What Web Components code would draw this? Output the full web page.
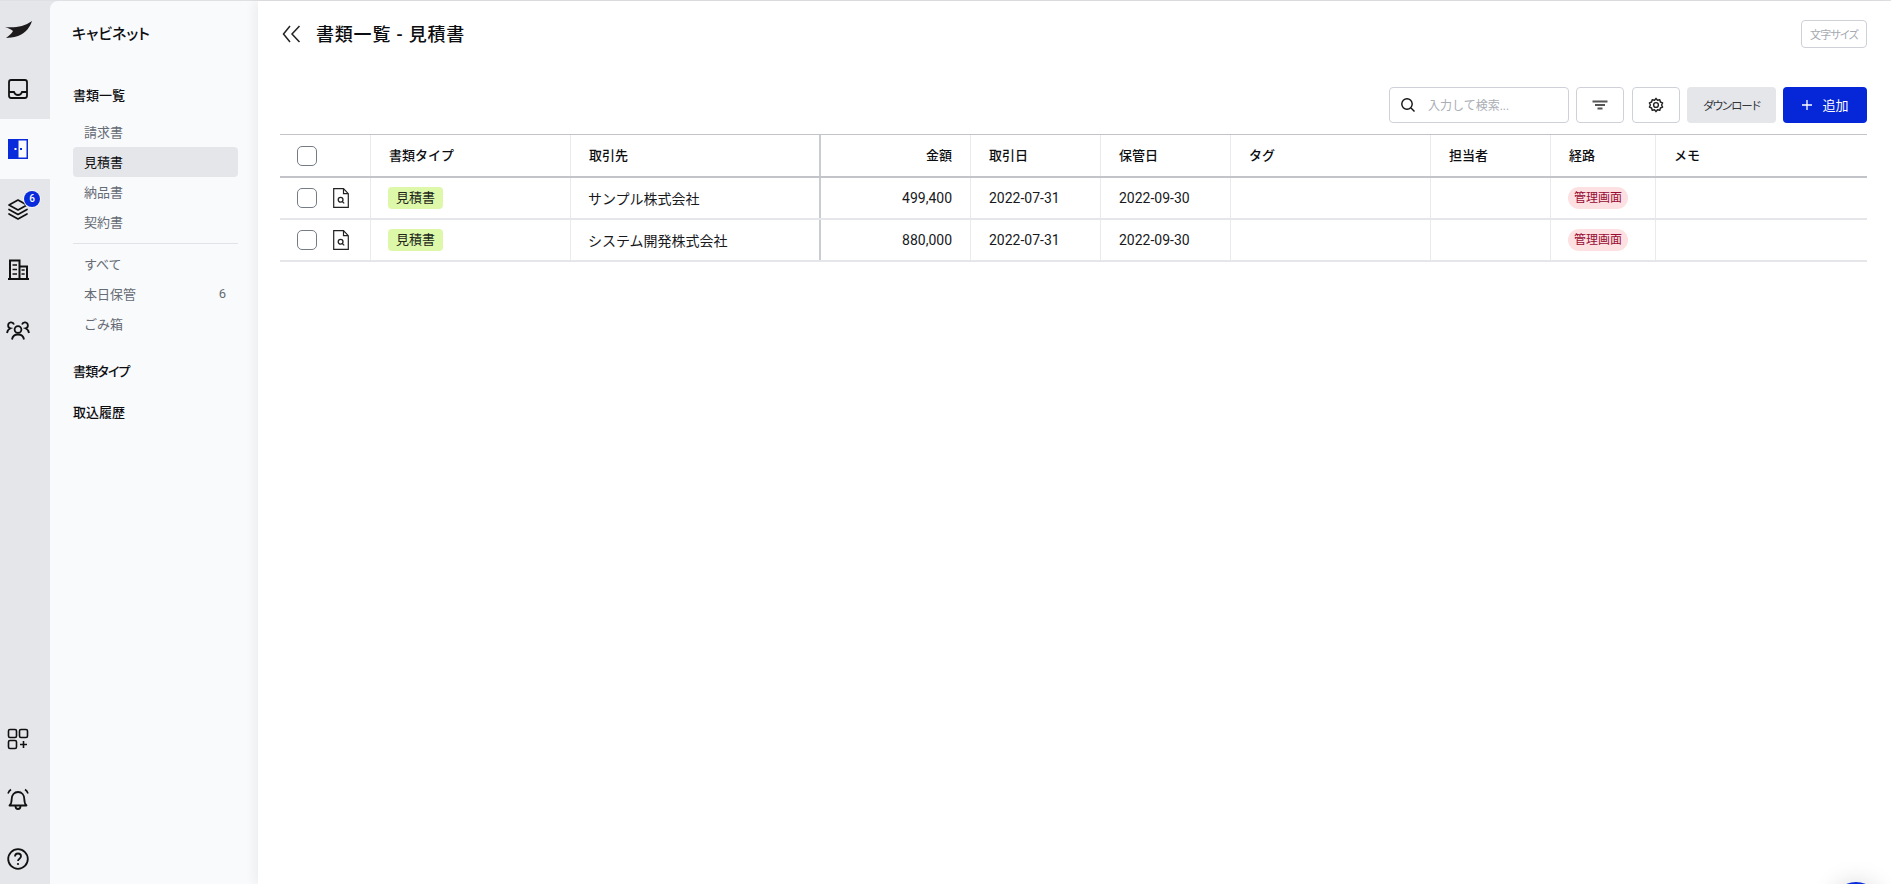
<!DOCTYPE html>
<html lang="ja">
<head>
<meta charset="utf-8">
<title>書類一覧 - 見積書</title>
<style>
  html, body { margin: 0; height: 100%; overflow: hidden; }
  body { font-family: Roboto, "Noto Sans CJK JP", sans-serif; color: #0c0d10; background: #e5e6ea; }
</style>
</head>
<body>
<cabinet-app></cabinet-app>
<script>
/**
 * Data Source
 */
const ICONS = {
  inbox: '<rect x="3" y="3" width="18" height="18" rx="2.2" fill="none" stroke="#111" stroke-width="1.8"/><path d="M3 15h5c.6 2 2 3 4 3s3.400-1 4-3h5" fill="none" stroke="#111" stroke-width="1.8"/>',
  door: '<rect x="2" y="2" width="20" height="20" fill="#0a2bdc"/><rect x="12.500" y="3.500" width="8" height="17" fill="#f9fafc"/><rect x="8.500" y="11" width="2" height="2" fill="#f9fafc"/><rect x="14" y="11" width="2" height="2" fill="#0a2bdc"/>',
  stack: '<path d="M12 3l9 5-9 5-9-5z M3 12.500l9 5 9-5 M3 17l9 5 9-5" fill="none" stroke="#111" stroke-width="1.700" stroke-linejoin="round" stroke-linecap="round"/>',
  building: '<path d="M2 22h21 M4 22V3.500h9.500V22 M13.500 9.500H21V22" fill="none" stroke="#111" stroke-width="2"/><path d="M6.500 8h4.500 M6.500 12.500h4.500 M6.500 17h4.500 M15.500 13h3.200 M15.500 17h3.200" fill="none" stroke="#111" stroke-width="1.700"/>',
  users: '<circle cx="12" cy="12.500" r="3.400" fill="none" stroke="#111" stroke-width="1.800"/><path d="M6 22.500c.5-3.500 3-5 6-5s5.500 1.500 6 5" fill="none" stroke="#111" stroke-width="1.800"/><path d="M8 7.500a3 3 0 1 0-3.500 3.800C3 12 1.500 13.500 1 16 M16 7.500a3 3 0 1 1 3.500 3.800c1.500.7 3 2.200 3.500 4.700" fill="none" stroke="#111" stroke-width="1.800"/>',
  apps: '<rect x="2.500" y="2.500" width="8" height="8" rx="1.500" fill="none" stroke="#111" stroke-width="1.600"/><rect x="13.500" y="2.500" width="8" height="8" rx="1.500" fill="none" stroke="#111" stroke-width="1.600"/><rect x="2.500" y="13.500" width="8" height="8" rx="1.500" fill="none" stroke="#111" stroke-width="1.600"/><path d="M17.500 14v7 M14 17.500h7" stroke="#111" stroke-width="1.600"/>',
  bell: '<path d="M3.500 18.500c1.700-1.500 2.200-3 2.200-6.500 0-4 2.500-7 6.300-7s6.300 3 6.300 7c0 3.500.5 5 2.200 6.500z" fill="none" stroke="#111" stroke-width="1.800" stroke-linejoin="round"/><path d="M9.500 19c0 2 1 3 2.500 3s2.500-1 2.500-3" fill="none" stroke="#111" stroke-width="1.800"/><path d="M2 6.500c.6-1.700 1.500-3 3-4 M22 6.500c-.6-1.700-1.500-3-3-4" fill="none" stroke="#111" stroke-width="1.600"/>',
  help: '<circle cx="12" cy="12" r="9.800" fill="none" stroke="#111" stroke-width="1.800"/><path d="M9 9.500c0-1.800 1.300-3 3-3s3 1.200 3 2.800c0 2.400-3 2.400-3 4.700" fill="none" stroke="#111" stroke-width="1.800"/><circle cx="12" cy="17" r="1.100" fill="#111"/>'
};

const ROWS = [
  { type: '見積書', partner: 'サンプル株式会社', amount: '499,400', dealt: '2022-07-31', stored: '2022-09-30', route: '管理画面' },
  { type: '見積書', partner: 'システム開発株式会社', amount: '880,000', dealt: '2022-07-31', stored: '2022-09-30', route: '管理画面' }
];

const COLUMNS = '91px 200px 250px 150px 130px 130px 200px 120px 105px 1fr';

/**
 * Web Component: <rail-item>
 */
class RailItem extends HTMLElement {
  connectedCallback() {
    const icon = ICONS[this.getAttribute('icon')];
    const badge = this.getAttribute('badge');
    this.attachShadow({ mode: 'open' }).innerHTML = `
      <style>
        :host { display: flex; align-items: center; justify-content: center; height: 60px; position: relative; padding-right: 14px; }
        :host([active]) { background: #f9fafc; }
        :host([small]) { height: 50px; }
        svg { width: 24px; height: 24px; display: block; }
        .badge {
          position: absolute; left: 24px; top: 12px; width: 16px; height: 16px; border-radius: 50%;
          background: #0a2bdc; color: #fff; font-size: 10px; line-height: 16px; text-align: center; font-weight: 500;
          box-shadow: 0 0 0 1px #f4f5f8;
        }
      </style>
      <svg viewBox="0 0 24 24">${icon}</svg>
      ${badge ? `<span class="badge">${badge}</span>` : ''}
    `;
  }
}
customElements.define('rail-item', RailItem);

/**
 * Web Component: <app-rail>
 */
class AppRail extends HTMLElement {
  constructor() {
    super();
    this.attachShadow({ mode: 'open' }).innerHTML = `
      <style>
        :host { display: flex; flex-direction: column; width: 50px; flex: none; background: #e5e6ea; }
        .logo { height: 58px; display: flex; align-items: flex-start; }
        .logo svg { width: 36px; height: 36px; margin: 12px 0 0 2px; }
        .bottom { margin-top: auto; display: flex; flex-direction: column; gap: 10px; }
      </style>
      <div class="logo"><svg viewBox="0 0 36 36"><path d="M3 14C12 15 22 14 30 8C28 14 24 20 16 23C11 24.500 7 24.500 4 25C7 23 10 20 11 18C9 16 6 15 3 14z" fill="#1d1a1c"/></svg></div>
      <rail-item icon="inbox"></rail-item>
      <rail-item icon="door" active></rail-item>
      <rail-item icon="stack" badge="6"></rail-item>
      <rail-item icon="building"></rail-item>
      <rail-item icon="users"></rail-item>
      <div class="bottom">
        <rail-item icon="apps" small></rail-item>
        <rail-item icon="bell" small></rail-item>
        <rail-item icon="help" small></rail-item>
      </div>
    `;
  }
}
customElements.define('app-rail', AppRail);

/**
 * Web Component: <nav-link>
 */
class NavLink extends HTMLElement {
  constructor() {
    super();
    this.attachShadow({ mode: 'open' }).innerHTML = `
      <style>
        :host {
          display: flex; justify-content: space-between; align-items: center; height: 30px; box-sizing: border-box;
          padding: 0 12px 2px 11px; border-radius: 4px; font-size: 13px; color: #666c75;
        }
        :host([active]) { background: #e5e6ea; color: #0c0d10; }
      </style>
      <span><slot></slot></span>
      <span><slot name="count"></slot></span>
    `;
  }
}
customElements.define('nav-link', NavLink);

/**
 * Web Component: <side-nav>
 */
class SideNav extends HTMLElement {
  constructor() {
    super();
    this.attachShadow({ mode: 'open' }).innerHTML = `
      <style>
        :host {
          display: block; width: 208px; flex: none; box-sizing: border-box; padding: 1px 20px 0 23px;
          background: #f9fafc; border-radius: 8px 0 0 0;
        }
        h1 { margin: 0 0 0 -1px; font-size: 15px; font-weight: 500; line-height: 22px; padding-top: 21px; font-feature-settings: "palt"; }
        h2 { margin: 0; font-size: 13px; font-weight: 500; line-height: 20px; }
        .first { margin-top: 41px; margin-bottom: 11px; }
        hr { border: 0; border-top: 1px solid #e1e3e8; margin: 6px 0 5px; }
        .after { margin-top: 23px; font-feature-settings: "palt"; letter-spacing: -.8px; }
        .last { margin-top: 21px; }
      </style>
      <h1>キャビネット</h1>
      <h2 class="first">書類一覧</h2>
      <nav-link>請求書</nav-link>
      <nav-link active>見積書</nav-link>
      <nav-link>納品書</nav-link>
      <nav-link>契約書</nav-link>
      <hr>
      <nav-link>すべて</nav-link>
      <nav-link>本日保管<span slot="count">6</span></nav-link>
      <nav-link>ごみ箱</nav-link>
      <h2 class="after">書類タイプ</h2>
      <h2 class="last">取込履歴</h2>
    `;
  }
}
customElements.define('side-nav', SideNav);

/**
 * Web Component: <page-toolbar>
 */
class PageToolbar extends HTMLElement {
  constructor() {
    super();
    this.attachShadow({ mode: 'open' }).innerHTML = `
      <style>
        :host { display: flex; justify-content: flex-end; gap: 7px; height: 36px; }
        .btn {
          box-sizing: border-box; height: 36px; border: 1px solid #cfd1d8; border-radius: 4px; background: #fff;
          display: flex; align-items: center; justify-content: center; font-size: 12px;
        }
        .icon { width: 48px; }
        .filter { margin-right: 1px; }
        .search { width: 180px; justify-content: flex-start; padding: 0 0 2px 10px; gap: 12px; color: #a9adb5; }
        .search svg { margin-top: 2px; }
        .download { width: 89px; border: 0; background: #e5e6ea; color: #33363c; font-size: 11.5px; letter-spacing: -1px; font-feature-settings: "palt"; }
        .add { width: 84px; border: 0; background: #0527d8; color: #fff; gap: 9px; font-size: 13px; padding-bottom: 2px; }
        .add svg { margin-top: 2px; }
      </style>
      <div class="btn search">
        <svg width="16" height="16" viewBox="0 0 16 16"><circle cx="7" cy="7" r="5.200" fill="none" stroke="#111" stroke-width="1.400"/><path d="M11 11l3.500 3.500" stroke="#111" stroke-width="1.400"/></svg>
        <span>入力して検索...</span>
      </div>
      <div class="btn icon filter">
        <svg width="16" height="12" viewBox="0 0 16 12"><path d="M.500 2.500h15 M3 6h10 M5.500 9.500h5" stroke="#555" stroke-width="1.800"/></svg>
      </div>
      <div class="btn icon">
        <svg width="16" height="16" viewBox="0 0 24 24"><circle cx="12" cy="12" r="3.600" fill="none" stroke="#222" stroke-width="2.100"/><path d="M12 2l2.200 2.800 3.500-.7.900 3.400 3.300 1.400-1.500 3.100 1.500 3.100-3.300 1.400-.9 3.400-3.500-.7L12 22l-2.200-2.800-3.500.7-.9-3.400-3.300-1.400L3.600 12 2.100 8.900l3.300-1.400.9-3.400 3.500.7z" fill="none" stroke="#222" stroke-width="2.100" stroke-linejoin="round"/></svg>
      </div>
      <div class="btn download">ダウンロード</div>
      <div class="btn add">
        <svg width="12" height="12" viewBox="0 0 12 12"><path d="M6 1v10 M1 6h10" stroke="#fff" stroke-width="1.300"/></svg>
        <span>追加</span>
      </div>
    `;
  }
}
customElements.define('page-toolbar', PageToolbar);

/**
 * Web Component: <doc-table>
 */
class DocTable extends HTMLElement {
  constructor() {
    super();
    const box = '<span class="check"></span>';
    const docIcon = `<svg width="16" height="20" viewBox="0 0 16 20"><path d="M.700.700h9.800l4.800 5v13.600H.700z M10.500.700v5h4.800" fill="none" stroke="#222" stroke-width="1.200"/><circle cx="7.600" cy="11.800" r="2.400" fill="none" stroke="#222" stroke-width="1.300"/><path d="M9.400 13.600l1.800 1.800" stroke="#222" stroke-width="1.300"/></svg>`;
    const heads = ['書類タイプ', '取引先', '金額', '取引日', '保管日', 'タグ', '担当者', '経路', 'メモ'];
    const cell = (text, cls = '') => `<div class="cell ${cls}">${text}</div>`;
    const rows = ROWS.map(r => `
      <div class="row body">
        <div class="cell tick">${box}${docIcon}</div>
        ${cell(`<span class="type">${r.type}</span>`, 'chip')}
        ${cell(r.partner, 'pin')}
        ${cell(r.amount, 'num')}
        ${cell(r.dealt)}
        ${cell(r.stored)}
        ${cell('')}
        ${cell('')}
        ${cell(`<span class="route">${r.route}</span>`, 'chip')}
        ${cell('')}
      </div>`).join('');
    this.attachShadow({ mode: 'open' }).innerHTML = `
      <style>
        :host { display: block; border-top: 1px solid #c2c4c9; font-size: 13px; }
        .row { display: grid; grid-template-columns: ${COLUMNS}; box-sizing: border-box; }
        .head { height: 43px; border-bottom: 2px solid #c2c4c9; font-weight: 500; }
        .head .cell { padding-bottom: 2px; }
        .head .tick { padding-bottom: 0; }
        .body { height: 42px; border-bottom: 2px solid #e4e6ea; }
        .cell {
          display: flex; align-items: center; padding: 0 18px; min-width: 0;
          border-right: 1px solid #e8eaed; white-space: nowrap;
        }
        .cell:last-child { border-right: 0; }
        .body .cell { font-size: 14px; color: #17191d; }
        .body .chip, .body .pin { padding-left: 17px; }
        .pin { border-right: 2px solid #c9ccd0 !important; }
        .num { justify-content: flex-end; }
        .tick { padding: 0 0 0 17px; gap: 16px; }
        .check {
          display: block; flex: none; box-sizing: border-box; width: 20px; height: 20px;
          border: 1.500px solid #767c86; border-radius: 5px; background: #fff;
        }
        .type { background: #dcf8a8; border-radius: 4px; height: 22px; line-height: 21px; padding: 0 8px; font-size: 13px; color: #20241a; }
        .route { background: #fde0e2; border-radius: 11px; height: 22px; line-height: 23px; padding: 0 6px; font-size: 12px; color: #980a32; }
      </style>
      <div class="row head">
        <div class="cell tick">${box}</div>
        ${heads.map((h, i) => cell(h, (i === 1 ? 'pin ' : '') + (i === 2 ? 'num' : ''))).join('')}
      </div>
      ${rows}
    `;
  }
}
customElements.define('doc-table', DocTable);

/**
 * Web Component: <main-panel>
 */
class MainPanel extends HTMLElement {
  constructor() {
    super();
    this.attachShadow({ mode: 'open' }).innerHTML = `
      <style>
        :host {
          display: flex; flex-direction: column; flex: 1; min-width: 0; position: relative; overflow: hidden;
          background: #fff; box-sizing: border-box; padding: 0 24px 0 22px; box-shadow: -4px 0 10px rgba(0,0,0,.05);
        }
        header { display: flex; align-items: center; height: 86px; flex: none; }
        .title { display: flex; align-items: center; gap: 15px; margin: -22px 0 0 2px; font-size: 18px; font-weight: 500; letter-spacing: .8px; }
        .title svg { margin-top: 2px; }
        .size {
          margin: -20px 0 0 auto; box-sizing: border-box; width: 66px; height: 28px; border: 1px solid #cfd1d8; border-radius: 4px;
          font-size: 11px; letter-spacing: -.8px; color: #a6aab2; display: flex; align-items: center; justify-content: center; font-feature-settings: "palt";
        }
        doc-table { margin-top: 11px; }
        .fab {
          position: absolute; right: 11px; top: 881px; width: 48px; height: 48px; border-radius: 50%;
          background: #0a2bdc; box-shadow: 0 0 24px rgba(0,0,0,.15);
        }
      </style>
      <header>
        <div class="title">
          <svg width="19" height="18" viewBox="0 0 19 18"><path d="M8 1L1.500 9 8 17 M17.500 1L10 9l7.500 8" fill="none" stroke="#222" stroke-width="1.500"/></svg>
          <span>書類一覧 - 見積書</span>
        </div>
        <div class="size">文字サイズ</div>
      </header>
      <page-toolbar></page-toolbar>
      <doc-table></doc-table>
      <div class="fab"></div>
    `;
  }
}
customElements.define('main-panel', MainPanel);

/**
 * Web Component: <cabinet-app>
 */
class CabinetApp extends HTMLElement {
  constructor() {
    super();
    this.attachShadow({ mode: 'open' }).innerHTML = `
      <style>
        :host { display: flex; height: 884px; box-sizing: border-box; border-top: 1px solid #dfe0e3; }
      </style>
      <app-rail></app-rail>
      <side-nav></side-nav>
      <main-panel></main-panel>
    `;
  }
}
customElements.define('cabinet-app', CabinetApp);
</script>
</body>
</html>
